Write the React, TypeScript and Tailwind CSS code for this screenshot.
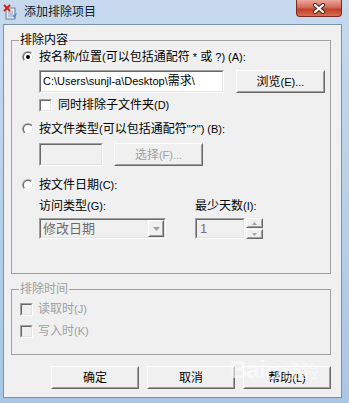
import React from 'react';

const font = "font-['Liberation_Sans','Noto_Sans_CJK_SC',sans-serif]";

// Latin runs are drawn a pixel smaller, like Tahoma beside the CJK glyphs
const T: React.FC<{ s: string }> = ({ s }) => (
  <>
    {s.split(/([\u4e00-\u9fff]+)/).filter(Boolean).map((part, i) =>
      /[\u4e00-\u9fff]/.test(part) ? <span key={i}>{part}</span> : <span key={i} className="text-[11px]">{part}</span>
    )}
  </>
);

const Sunken: React.FC<{ className?: string; inner?: string; children?: React.ReactNode }> = ({ className = '', inner = 'bg-white', children }) => (
  <div className={`border border-t-[#a0a0a0] border-l-[#a0a0a0] border-b-white border-r-white ${className}`}>
    <div className={`h-full w-full border border-t-[#696969] border-l-[#696969] border-b-[#e3e3e3] border-r-[#e3e3e3] ${inner}`}>
      {children}
    </div>
  </div>
);

const Raised: React.FC<{ className?: string; children?: React.ReactNode; disabled?: boolean }> = ({ className = '', children, disabled }) => (
  <div className={`border border-t-white border-l-white border-b-[#696969] border-r-[#696969] bg-[#f0f0f0] ${className}`}>
    <div className={`flex h-full w-full items-center justify-center border border-t-[#f0f0f0] border-l-[#f0f0f0] border-b-[#a0a0a0] border-r-[#a0a0a0] text-[12px] leading-[16px] ${disabled ? 'text-[#a0a0a0]' : 'text-black'}`}>
      {children}
    </div>
  </div>
);

const Radio: React.FC<{ checked?: boolean }> = ({ checked }) => (
  <div className="flex h-[12px] w-[12px] shrink-0 items-center justify-center rounded-full bg-[linear-gradient(135deg,#a0a0a0_50%,#ffffff_50%)]">
    <div className="flex h-[10px] w-[10px] items-center justify-center rounded-full bg-[linear-gradient(135deg,#696969_50%,#e3e3e3_50%)]">
      <div className="flex h-[8px] w-[8px] items-center justify-center rounded-full bg-white">
        {checked && <div className="h-[4px] w-[4px] rounded-full bg-black" />}
      </div>
    </div>
  </div>
);

const Check: React.FC<{ disabled?: boolean }> = ({ disabled }) => (
  <Sunken className="h-[13px] w-[13px] shrink-0" inner={disabled ? 'bg-[#f0f0f0]' : 'bg-white'} />
);

const Arrow: React.FC<{ up?: boolean; size?: number }> = ({ up, size = 7 }) => (
  <svg width={size} height={Math.ceil(size / 2)} viewBox="0 0 7 4">
    <path d={up ? 'M3.5 0 L7 4 L0 4 Z' : 'M0 0 L7 0 L3.5 4 Z'} fill="#a0a0a0" />
  </svg>
);

const TitleIcon = () => (
  <svg width="16" height="16" viewBox="0 0 16 16">
    <rect x="3" y="4" width="9" height="11" fill="#dfe7f0" stroke="#6b7f99" />
    <path d="M5 8h5M5 10h5M5 12h4" stroke="#8fa3bd" />
    <path d="M9 12 l5 -3 l-2 5 z" fill="#4d8bd6" />
    <path d="M1 1 L7 7 M7 1 L1 7" stroke="#d42020" strokeWidth="2" />
  </svg>
);

export default function App() {
  return (
    <div className={`relative flex h-[403px] w-[349px] flex-col bg-[linear-gradient(180deg,#c6d9ee_0%,#bcd2ea_40%,#a9c6e6_100%)] ${font}`}>
      {/* title bar */}
      <div className="flex h-[24px] shrink-0 items-center">
        <div className="ml-[3px]"><TitleIcon /></div>
        <span className="ml-[5px] text-[12px] leading-[16px] text-[#0c1a2b]">添加排除项目</span>
        <div className="ml-auto mr-[7px] flex h-[17px] w-[46px] self-start items-center justify-center rounded-b-[4px] border border-t-0 border-[#7a2a22] bg-[linear-gradient(180deg,#e9a899_0%,#d46a58_45%,#c2402c_60%,#d8704f_100%)]">
          <svg width="14" height="11" viewBox="0 0 14 11">
            <path d="M3 2 L11 9 M11 2 L3 9" stroke="#3a2020" strokeWidth="4" strokeLinecap="round" />
            <path d="M3 2 L11 9 M11 2 L3 9" stroke="#ffffff" strokeWidth="2.2" strokeLinecap="round" />
          </svg>
        </div>
      </div>

      {/* client */}
      <div className="mb-[5px] ml-[3px] mr-[7px] flex flex-1 flex-col border border-[#7b90a9] bg-[#f0f0f0] text-[12px] leading-[16px] text-black">
        <fieldset className="ml-[7px] mt-[7px] w-[320px] border border-[#a0a0a0]">
          <legend className="ml-[7px] px-[1px] leading-[16px]">排除内容</legend>
          <div className="ml-[10px] mt-[1px] flex h-[16px] items-center gap-[5px]">
            <Radio checked />
            <span><T s="按名称/位置(可以包括通配符 * 或 ?) (A):" /></span>
          </div>
          <div className="ml-[27px] mt-[5px] flex h-[23px]">
            <Sunken className="h-[23px] w-[185px]">
              <div className="px-[2px] leading-[19px]"><T s="C:\Users\sunjl-a\Desktop\需求\" /></div>
            </Sunken>
            <Raised className="ml-[12px] h-[23px] w-[89px]"><T s="浏览(E)..." /></Raised>
          </div>
          <div className="ml-[27px] mt-[4px] flex h-[16px] items-center gap-[6px]">
            <Check />
            <span><T s="同时排除子文件夹(D)" /></span>
          </div>
          <div className="ml-[10px] mt-[8px] flex h-[16px] items-center gap-[5px]">
            <Radio />
            <span><T s={'按文件类型(可以包括通配符"?") (B):'} /></span>
          </div>
          <div className="ml-[27px] mt-[6px] flex h-[23px]">
            <Sunken className="h-[23px] w-[64px]" inner="bg-[#f0f0f0]" />
            <Raised className="ml-[11px] h-[23px] w-[89px]" disabled><T s="选择(F)..." /></Raised>
          </div>
          <div className="ml-[10px] mt-[11px] flex h-[16px] items-center gap-[5px]">
            <Radio />
            <span><T s="按文件日期(C):" /></span>
          </div>
          <div className="ml-[27px] mt-[5px] flex h-[16px]">
            <span className="w-[156px]"><T s="访问类型(G):" /></span>
            <span><T s="最少天数(I):" /></span>
          </div>
          <div className="mb-[34px] ml-[27px] mt-[4px] flex h-[21px]">
            <Sunken className="h-[21px] w-[127px]" inner="bg-[#f0f0f0] flex items-center">
              <span className="flex-1 pl-[2px] text-[13px] leading-[17px] text-[#6d6d6d]">修改日期</span>
              <Raised className="h-[17px] w-[16px]"><Arrow /></Raised>
            </Sunken>
            <Sunken className="ml-[29px] h-[21px] w-[50px]" inner="bg-[#f0f0f0]">
              <div className="pl-[3px] text-[13px] leading-[17px] text-[#7a6d80]">1</div>
            </Sunken>
            <div className="ml-[1px] flex w-[17px] flex-col">
              <Raised className="h-[10px] w-[17px]"><Arrow up size={5} /></Raised>
              <Raised className="mt-[1px] h-[10px] w-[17px]"><Arrow size={5} /></Raised>
            </div>
          </div>
        </fieldset>

        <fieldset className="ml-[7px] mt-[7px] w-[320px] border border-[#a0a0a0] text-[#a0a0a0]">
          <legend className="ml-[7px] px-[1px] leading-[16px]">排除时间</legend>
          <div className="ml-[8px] mt-[4px] flex h-[16px] items-center gap-[5px]">
            <Check disabled />
            <span><T s="读取时(J)" /></span>
          </div>
          <div className="mb-[15px] ml-[8px] mt-[6px] flex h-[16px] items-center gap-[5px]">
            <Check disabled />
            <span><T s="写入时(K)" /></span>
          </div>
        </fieldset>

        <div className="mr-[10px] mt-[11px] flex justify-end gap-[8px]">
          <Raised className="h-[23px] w-[88px]">确定</Raised>
          <Raised className="h-[23px] w-[88px]">取消</Raised>
          <Raised className="h-[23px] w-[88px]"><T s="帮助(L)" /></Raised>
        </div>
      </div>

      {/* watermark */}
      <div className="pointer-events-none absolute left-[230px] top-[356px] flex items-end gap-[2px] text-white/60">
        <span className="text-[24px] font-bold leading-[28px] tracking-[-1px]">Bai</span>
        <span className="mb-[4px] h-[14px] w-[14px] rounded-full border-2 border-white/60" />
        <span className="text-[18px] leading-[24px]">经验</span>
      </div>
    </div>
  );
}
